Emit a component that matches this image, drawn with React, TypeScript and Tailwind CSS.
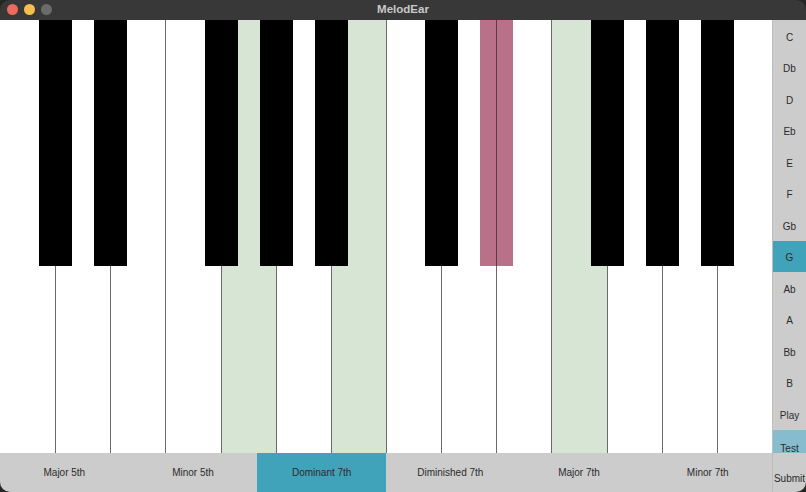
import React from 'react';

const WHITE = ['C', 'D', 'E', 'F', 'G', 'A', 'B', 'C', 'D', 'E', 'F', 'G', 'A', 'B'];
// index of the white key to the left of each black key
const BLACK_AFTER = [0, 1, 3, 4, 5, 7, 8, 10, 11, 12];

const GREEN_WHITE = [4, 6, 10];
const WRONG_BLACK = 6; // Eb, upper octave

const NOTES = ['C', 'Db', 'D', 'Eb', 'E', 'F', 'Gb', 'G', 'Ab', 'A', 'Bb', 'B', 'Play'];
const CHORDS = ['Major 5th', 'Minor 5th', 'Dominant 7th', 'Diminished 7th', 'Major 7th', 'Minor 7th'];

function Keyboard() {
  const keyW = 100 / WHITE.length;
  return (
    <div className="relative flex-1 flex bg-white overflow-hidden">
      {WHITE.map((k, i) => (
        <div
          key={i}
          className={`flex-1 border-l ${i === 0 ? 'border-transparent' : 'border-[#6a6a6a]'} ${GREEN_WHITE.includes(i) ? 'bg-[#d6e5d4]' : 'bg-white'}`}
        />
      ))}
      {BLACK_AFTER.map((w, j) => (
        <div
          key={j}
          className={`absolute top-0 h-[246px] w-[33px] -ml-[16px] ${j === WRONG_BLACK ? 'bg-[#b87189]' : 'bg-black'}`}
          style={{ left: `${(w + 1) * keyW}%` }}
        >
          {j === WRONG_BLACK && <div className="ml-[16px] h-full w-px bg-[#5e3a47]" />}
        </div>
      ))}
    </div>
  );
}

function ChordBar() {
  return (
    <div className="h-[39px] flex bg-[#cccccc] text-[10px] text-[#2b2b2b]">
      {CHORDS.map((c) => (
        <div
          key={c}
          className={`flex-1 flex items-center justify-center ${c === 'Dominant 7th' ? 'bg-[#41a3b9]' : ''}`}
        >
          {c}
        </div>
      ))}
    </div>
  );
}

function NoteColumn() {
  return (
    <div className="w-[34px] flex flex-col bg-[#cccccc] border-l border-[#bdbdbd] text-[10px] text-[#2b2b2b]">
      {NOTES.map((n) => (
        <div
          key={n}
          className={`h-[31.5px] flex items-center justify-center pt-[3px] ${n === 'G' ? 'bg-[#41a3b9]' : ''}`}
        >
          {n}
        </div>
      ))}
      <div className="h-[23.5px] flex items-start justify-center pt-[11px] bg-[#86bccd]">Test</div>
      <div className="relative flex-1 flex items-center justify-center pt-[12px]">
        Submit
        <svg className="absolute right-0 bottom-0" width="6" height="6" viewBox="0 0 6 6">
          <path d="M5 1 L1 5 M5 3.5 L3.5 5" stroke="#8a8a8a" strokeWidth="0.8" />
        </svg>
      </div>
    </div>
  );
}

export default function App() {
  return (
    <div
      className="w-[806px] h-[492px] bg-[#262626]"
      style={{ fontFamily: '"Liberation Sans", Arial, sans-serif' }}
    >
      <div className="w-full h-full flex flex-col rounded-[10px] overflow-hidden">
        <div className="relative h-[20px] bg-[#383838] flex items-center justify-center shrink-0">
          <div className="absolute left-[7px] top-[4px] flex gap-[6px]">
            <span className="w-[11px] h-[11px] rounded-full bg-[#ec6a5e]" />
            <span className="w-[11px] h-[11px] rounded-full bg-[#f4bf4f]" />
            <span className="w-[11px] h-[11px] rounded-full bg-[#6b6b6b]" />
          </div>
          <span className="text-[11.5px] font-bold text-[#c9c9c9]">MelodEar</span>
        </div>
        <div className="flex-1 flex">
          <div className="flex-1 flex flex-col">
            <Keyboard />
            <ChordBar />
          </div>
          <NoteColumn />
        </div>
      </div>
    </div>
  );
}
